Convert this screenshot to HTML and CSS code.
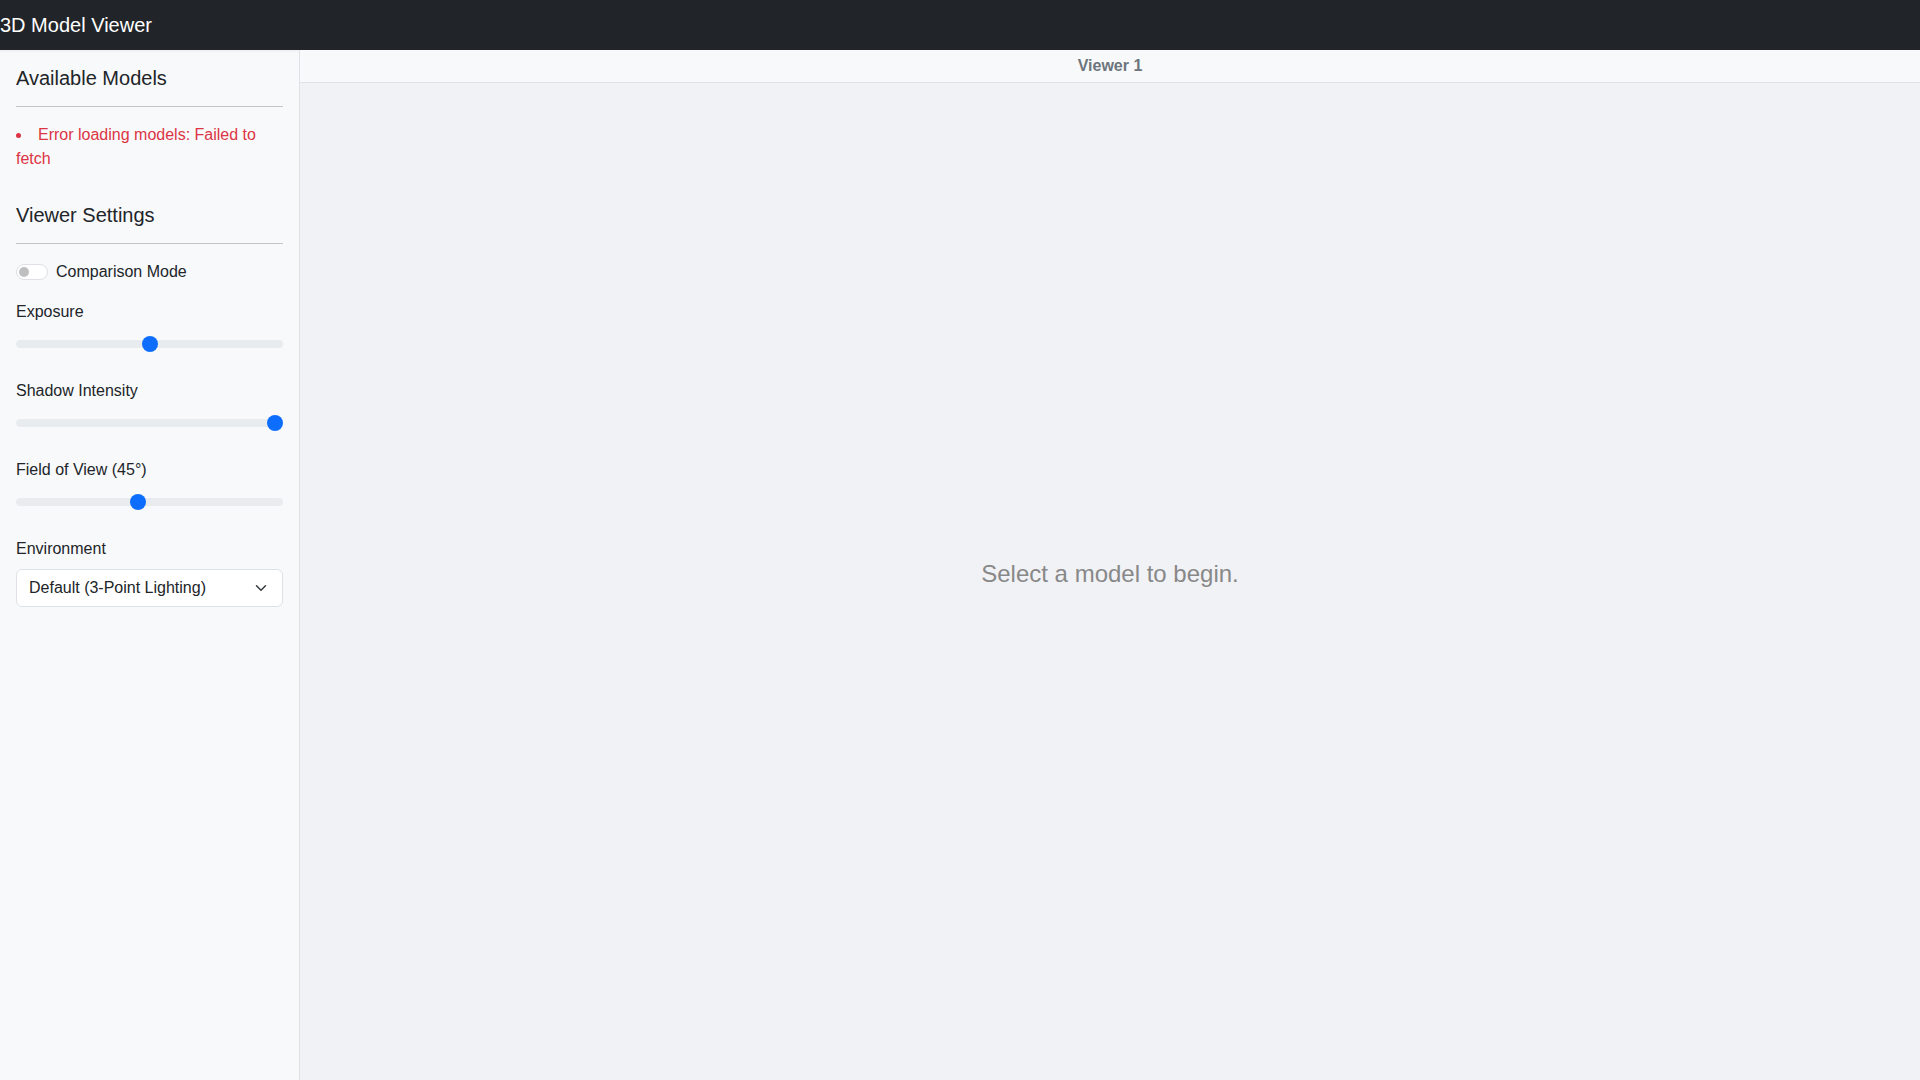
FILE: index.html
```html
<!DOCTYPE html>
<html lang="en">
  <head>
    <meta charset="UTF-8" />
    <meta name="viewport" content="width=device-width, initial-scale=1.0" />
    <title>3D Model Viewer</title>
    <link rel="stylesheet" href="styles.css">
  </head>
  <body>
    <div class="navbar">
      <span class="brand">3D Model Viewer</span>
    </div>

    <div class="main">
      <div class="sidebar">
        <div class="section">
          <h5 class="section-title">Available Models</h5>
          <hr />
          <ul class="model-list">
            <li class="error">Error loading models: Failed to fetch</li>
          </ul>
        </div>

        <div class="section">
          <h5 class="section-title">Viewer Settings</h5>
          <hr />

          <div class="form-check">
            <input type="checkbox" class="switch" id="comparison-toggle" />
            <label for="comparison-toggle">Comparison Mode</label>
          </div>

          <div class="form-group">
            <label class="form-label" for="exposure">Exposure</label>
            <input type="range" class="form-range" id="exposure" min="0" max="2" step="0.1" value="1" />
          </div>

          <div class="form-group">
            <label class="form-label" for="shadow">Shadow Intensity</label>
            <input type="range" class="form-range" id="shadow" min="0" max="1" step="0.1" value="1" />
          </div>

          <div class="form-group">
            <label class="form-label" for="fov">Field of View (45°)</label>
            <input type="range" class="form-range" id="fov" min="20" max="75" step="1" value="45" />
          </div>

          <div class="form-group">
            <label class="form-label" for="environment">Environment</label>
            <div class="select-wrap">
              <select class="form-select" id="environment">
                <option>Default (3-Point Lighting)</option>
                <option>Neutral</option>
                <option>Studio</option>
              </select>
              <svg class="chevron" width="16" height="16" viewBox="0 0 16 16">
                <path d="M2 5l6 6 6-6" fill="none" stroke="#343a40" stroke-width="2" stroke-linecap="round" stroke-linejoin="round" />
              </svg>
            </div>
          </div>
        </div>
      </div>

      <div class="viewer">
        <div class="viewer-header">Viewer 1</div>
        <div class="viewer-body">
          <p class="placeholder">Select a model to begin.</p>
        </div>
      </div>
    </div>
  </body>
</html>
```

FILE: styles.css
```css
* {
  box-sizing: border-box;
}

html,
body {
  height: 100%;
}

body {
  margin: 0;
  font-family: "Liberation Sans", Arial, sans-serif;
  font-size: 16px;
  line-height: 1.5;
  color: #212529;
  display: flex;
  flex-direction: column;
  overflow: hidden;
}

.navbar {
  height: 50px;
  flex-shrink: 0;
  background: #212529;
  display: flex;
  align-items: center;
}

.brand {
  color: white;
  font-size: 20px;
  line-height: 30px;
}

.main {
  flex: 1;
  display: flex;
  min-height: 0;
}

.sidebar {
  width: 300px;
  flex-shrink: 0;
  padding: 16px;
  background: #f8f9fa;
  border-right: 1px solid #dee2e6;
  box-shadow: inset 0 3px 3px -2px rgba(0, 0, 0, 0.06);
}

.section {
  margin-bottom: 32px;
}

.section-title {
  margin: 0;
  font-size: 20px;
  font-weight: 500;
  line-height: 1.2;
}

hr {
  margin: 16px 0;
  border: 0;
  border-top: 1px solid #c4c5c7;
}

.model-list {
  margin: 0;
  padding: 0;
  list-style-position: inside;
}

.error {
  color: #dc3545;
}

.form-check {
  display: flex;
  align-items: center;
  gap: 8px;
  height: 24px;
  margin-bottom: 16px;
}

.form-check label {
  line-height: 24px;
}

.switch {
  appearance: none;
  margin: 0;
  width: 32px;
  height: 16px;
  border: 1px solid #dee2e6;
  border-radius: 8px;
  background: white;
  position: relative;
}

.switch::before {
  content: "";
  position: absolute;
  top: 2px;
  left: 2px;
  width: 10px;
  height: 10px;
  border-radius: 50%;
  background: #bfbfbf;
}

.form-group {
  margin-bottom: 23px;
}

.form-label {
  display: block;
  margin-bottom: 8px;
}

.form-range {
  appearance: none;
  display: block;
  width: 100%;
  height: 24px;
  margin: 0;
  padding: 0;
  background: transparent;
}

.form-range::-webkit-slider-runnable-track {
  height: 8px;
  border-radius: 4px;
  background: #e9ecef;
}

.form-range::-webkit-slider-thumb {
  appearance: none;
  width: 16px;
  height: 16px;
  margin-top: -4px;
  border-radius: 50%;
  background: #0d6efd;
  border: 0;
}

.select-wrap {
  position: relative;
}

.form-select {
  appearance: none;
  display: block;
  width: 100%;
  height: 38px;
  padding: 6px 36px 6px 12px;
  font-family: inherit;
  font-size: 16px;
  line-height: 1.5;
  color: #212529;
  background: white;
  border: 1px solid #dee2e6;
  border-radius: 6px;
}

.chevron {
  position: absolute;
  right: 16px;
  top: 13px;
  width: 12px;
  height: 12px;
  pointer-events: none;
}

.viewer {
  flex: 1;
  display: flex;
  flex-direction: column;
  background: #f1f2f6;
}

.viewer-header {
  height: 33px;
  flex-shrink: 0;
  background: #f8f9fa;
  border-bottom: 1px solid #dee2e6;
  text-align: center;
  font-weight: bold;
  color: #6c757d;
  line-height: 32px;
}

.viewer-body {
  flex: 1;
  display: flex;
  align-items: center;
  justify-content: center;
}

.placeholder {
  margin: 0 0 16px;
  font-size: 24px;
  color: #888888;
}
```
